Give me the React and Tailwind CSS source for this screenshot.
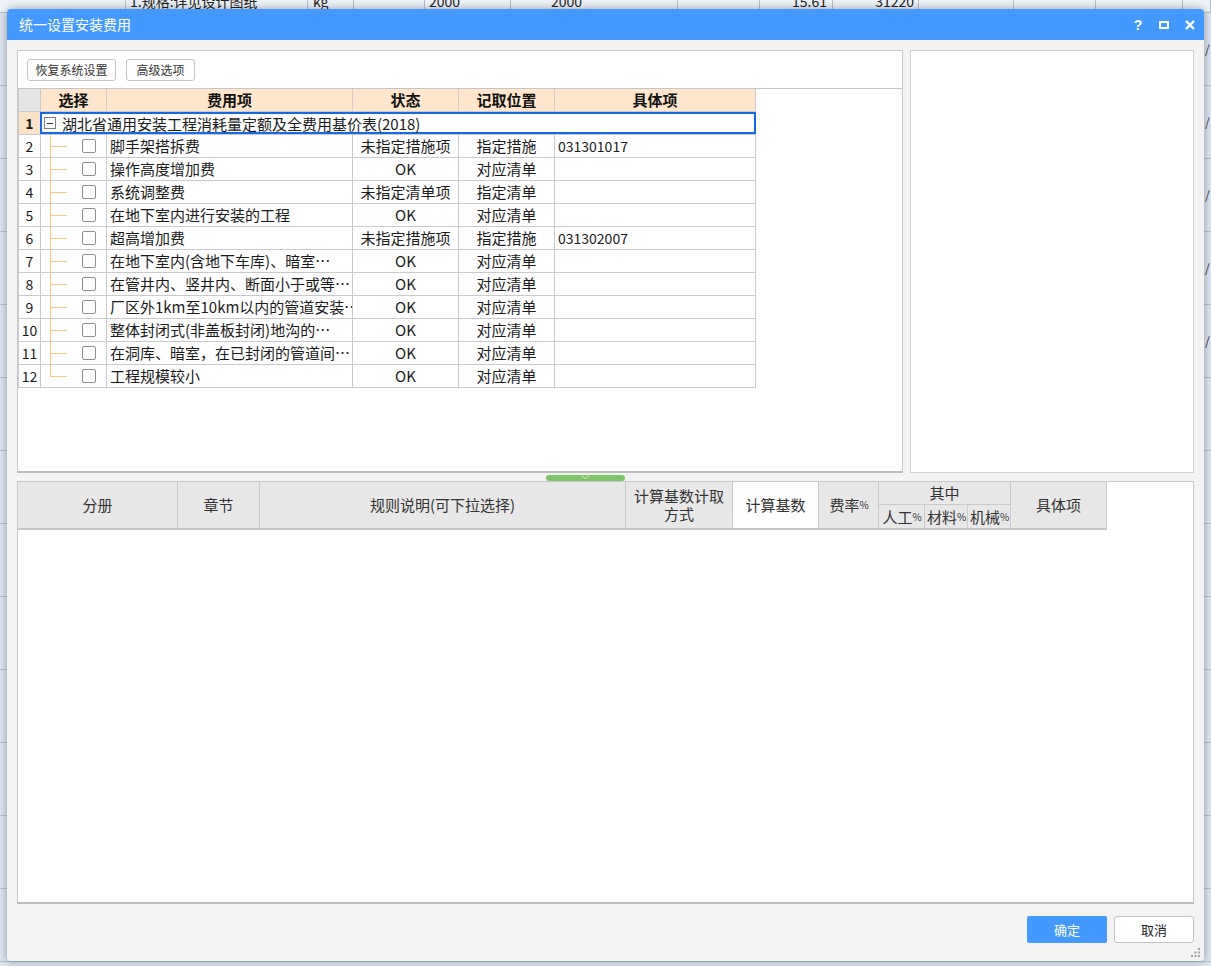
import React from 'react';

const FONT = "font-['Noto_Sans_CJK_SC','Liberation_Sans',sans-serif]";

const bgCells = [
  { w: 'w-[126px]', t: '' },
  { w: 'w-[182px]', t: '1.规格:详见设计图纸', c: 'pl-[4px]' },
  { w: 'w-[46px]', t: 'kg', c: 'pl-[5px]' },
  { w: 'w-[71px]', t: '' },
  { w: 'w-[86px]', t: '2000', c: 'pl-[4px]' },
  { w: 'w-[167px]', t: '2000', c: 'pl-[40px]' },
  { w: 'w-[82px]', t: '' },
  { w: 'w-[73px]', t: '15.61', c: 'text-right pr-[5px]' },
  { w: 'w-[86px]', t: '31220', c: 'text-right pr-[4px]' },
  { w: 'w-[95px]', t: '' },
  { w: 'w-[82px]', t: '' },
  { w: 'w-[87px]', t: '' },
  { w: 'w-[28px]', t: '' },
];

const rows = [
  { n: 2, name: '脚手架搭拆费', state: '未指定措施项', pos: '指定措施', item: '031301017' },
  { n: 3, name: '操作高度增加费', state: 'OK', pos: '对应清单', item: '' },
  { n: 4, name: '系统调整费', state: '未指定清单项', pos: '指定清单', item: '' },
  { n: 5, name: '在地下室内进行安装的工程', state: 'OK', pos: '对应清单', item: '' },
  { n: 6, name: '超高增加费', state: '未指定措施项', pos: '指定措施', item: '031302007' },
  { n: 7, name: '在地下室内(含地下车库)、暗室…', state: 'OK', pos: '对应清单', item: '' },
  { n: 8, name: '在管井内、竖井内、断面小于或等…', state: 'OK', pos: '对应清单', item: '' },
  { n: 9, name: '厂区外1km至10km以内的管道安装…', state: 'OK', pos: '对应清单', item: '' },
  { n: 10, name: '整体封闭式(非盖板封闭)地沟的…', state: 'OK', pos: '对应清单', item: '' },
  { n: 11, name: '在洞库、暗室，在已封闭的管道间…', state: 'OK', pos: '对应清单', item: '' },
  { n: 12, name: '工程规模较小', state: 'OK', pos: '对应清单', item: '' },
];

const FeeRow = ({ r, last }) => (
  <div className="flex h-[23px] border-b border-[#cacaca] text-[15px] leading-[22px] text-[#1a1a1a]">
    <div className="w-[22px] border-r border-[#cacaca] text-center text-[14px]">{r.n}</div>
    <div className="relative w-[66px] border-r border-[#cacaca]">
      {/* 树形连接线 */}
      <span className={`absolute left-[9px] top-0 w-px bg-[#ffc77d] ${last ? 'h-[11px]' : 'h-[23px]'}`} />
      <span className="absolute left-[9px] top-[11px] w-[17px] h-px bg-[#ffc77d]" />
      <span className="absolute left-[41px] top-[4px] w-[14px] h-[14px] border border-[#8f8f8f] rounded-[2px] bg-white" />
    </div>
    <div className="w-[246px] border-r border-[#cacaca] pl-[3px] whitespace-nowrap overflow-hidden">{r.name}</div>
    <div className="w-[106px] border-r border-[#cacaca] text-center">{r.state}</div>
    <div className="w-[96px] border-r border-[#cacaca] text-center">{r.pos}</div>
    <div className="w-[201px] border-r border-[#cacaca] pl-[3px] text-[14px]">{r.item}</div>
  </div>
);

const HeadCell = ({ w, children, extra = '' }) => (
  <div className={`${w} border-r border-[#cacaca] flex items-center justify-center text-[15px] text-[#333] ${extra}`}>
    {children}
  </div>
);

const Pct = () => <span className="text-[10px] tracking-[-1px]">%</span>;

export default function App() {
  return (
    <div className={`relative w-[1211px] h-[966px] overflow-hidden bg-[#dde5f1] ${FONT}`}>
      {/* 背景表格 */}
      <div className="flex h-[24px] -mt-[11px] bg-[#eef2f9] border-b border-[#b7c0cc] text-[14px] leading-[24px] text-[#222]">
        {bgCells.map((c, i) => (
          <div key={i} className={`${c.w} border-r border-[#b7c0cc] whitespace-nowrap overflow-hidden ${c.c || ''}`}>
            {c.t}
          </div>
        ))}
      </div>
      {Array.from({ length: 13 }).map((_, i) => (
        <div key={i} className="h-[73px] border-b border-[#b7c0cc] flex items-center justify-end">
          <span className="w-[6px] text-[12px] text-[#333]">{i < 5 ? '/' : ''}</span>
        </div>
      ))}

      {/* 对话框 */}
      <div className="absolute left-[7px] top-[9px] w-[1197px] h-[952px] bg-[#f3f3f3] rounded-[4px] shadow-[0_0_8px_rgba(0,0,0,0.35)] flex flex-col overflow-hidden">
        <div className="h-[31px] shrink-0 bg-[#4499ff] flex items-center pl-[12px] pr-[9px] text-white text-[14px]">
          <span>统一设置安装费用</span>
          <div className="ml-auto flex items-center">
            <span className="w-[10px] text-center text-[14px] font-bold leading-none font-['Liberation_Sans',sans-serif]">?</span>
            <span className="ml-[16px] w-[10px] h-[8px] border-2 border-white" />
            <svg className="ml-[16px]" width="10" height="10" viewBox="0 0 10 10">
              <path d="M1 1L9 9M9 1L1 9" stroke="white" strokeWidth="2.4" />
            </svg>
          </div>
        </div>

        <div className="flex-1 flex flex-col px-[10px] pt-[10px]">
          <div className="h-[423px] flex gap-[7px]">
            <div className="w-[886px] bg-white border border-[#c9c9c9] border-b-2 border-b-[#bcbcbc] flex flex-col">
              <div className="h-[38px] shrink-0 border-b border-[#c4c4c4] flex items-start pt-[8px] pl-[9px] gap-[10px]">
                <button className="w-[89px] h-[22px] bg-white border border-[#c4c4c4] rounded-[3px] text-[12px] text-[#333]">恢复系统设置</button>
                <button className="w-[69px] h-[22px] bg-white border border-[#c4c4c4] rounded-[3px] text-[12px] text-[#333]">高级选项</button>
              </div>
              <div className="w-[738px] border-l border-[#cacaca]">
                <div className="flex h-[23px] border-b border-[#cacaca] text-[15px] leading-[22px] font-bold text-[#111]">
                  <div className="w-[22px] bg-[#e6e6e6] border-r border-[#cacaca]" />
                  <div className="w-[66px] bg-[#ffe6cc] border-r border-[#d6cbbd] text-center">选择</div>
                  <div className="w-[246px] bg-[#ffe6cc] border-r border-[#d6cbbd] text-center">费用项</div>
                  <div className="w-[106px] bg-[#ffe6cc] border-r border-[#d6cbbd] text-center">状态</div>
                  <div className="w-[96px] bg-[#ffe6cc] border-r border-[#d6cbbd] text-center">记取位置</div>
                  <div className="w-[201px] bg-[#ffe6cc] border-r border-[#cacaca] text-center">具体项</div>
                </div>
                <div className="flex h-[23px] border-b border-[#cacaca] text-[15px] leading-[19px] text-[#1a1a1a]">
                  <div className="w-[22px] bg-[#fde3c5] border-r border-[#cacaca] text-center text-[14px] font-bold leading-[22px]">1</div>
                  <div className="w-[717px] -ml-px border-2 border-[#1669e6] flex items-center pl-[2px]">
                    <span className="w-[12px] h-[12px] border border-[#7d7d7d] flex items-center justify-center bg-white">
                      <span className="w-[6px] h-px bg-[#333]" />
                    </span>
                    <span className="ml-[6px] whitespace-nowrap">湖北省通用安装工程消耗量定额及全费用基价表(2018)</span>
                  </div>
                </div>
                {rows.map((r, i) => (
                  <FeeRow key={r.n} r={r} last={i === rows.length - 1} />
                ))}
              </div>
            </div>
            <div className="flex-1 bg-white border border-[#cfcfcf]" />
          </div>

          {/* 分隔条 */}
          <div className="h-[8px] shrink-0 pl-[529px] pt-[2px]">
            <div className="w-[79px] h-[6px] rounded-[3px] bg-[#7fc46a] flex justify-center">
              <svg width="9" height="5" viewBox="0 0 9 5">
                <path d="M1 0.5L4.5 4L8 0.5" stroke="#e6f4df" strokeWidth="1" fill="none" />
              </svg>
            </div>
          </div>

          <div className="h-[423px] shrink-0 bg-white border border-[#c9c9c9] border-b-2 border-b-[#bcbcbc]">
            <div className="flex w-[1089px] h-[48px] bg-[#e8e8e8] border-b-2 border-[#c6c6c6] leading-[18px]">
              <HeadCell w="w-[160px]">分册</HeadCell>
              <HeadCell w="w-[82px]">章节</HeadCell>
              <HeadCell w="w-[366px]">规则说明(可下拉选择)</HeadCell>
              <HeadCell w="w-[107px]" extra="flex-col">
                <span className="leading-[18px]">计算基数计取</span>
                <span className="leading-[18px]">方式</span>
              </HeadCell>
              <HeadCell w="w-[86px]" extra="bg-white">计算基数</HeadCell>
              <HeadCell w="w-[60px]">费率<Pct /></HeadCell>
              <div className="w-[132px] border-r border-[#cacaca] flex flex-col text-[15px] text-[#333]">
                <div className="h-[23px] border-b border-[#cacaca] flex items-center justify-center">其中</div>
                <div className="flex-1 flex whitespace-nowrap">
                  <div className="w-[46px] border-r border-[#cacaca] flex items-center justify-center">人工<Pct /></div>
                  <div className="w-[43px] border-r border-[#cacaca] flex items-center justify-center">材料<Pct /></div>
                  <div className="flex-1 flex items-center justify-center">机械<Pct /></div>
                </div>
              </div>
              <HeadCell w="w-[96px]">具体项</HeadCell>
            </div>
          </div>

          <div className="flex justify-end gap-[7px] pt-[12px]">
            <button className="w-[80px] h-[27px] bg-[#4499ff] rounded-[2px] text-white text-[13px]">确定</button>
            <button className="w-[80px] h-[27px] bg-white border border-[#c2c2c2] rounded-[3px] text-[#222] text-[13px]">取消</button>
          </div>
        </div>

        <svg className="absolute right-[3px] bottom-[3px]" width="10" height="10" viewBox="0 0 10 10">
          <rect x="7" y="0" width="2" height="2" fill="#a0a0a0" />
          <rect x="3.5" y="3.5" width="2" height="2" fill="#a0a0a0" />
          <rect x="7" y="3.5" width="2" height="2" fill="#a0a0a0" />
          <rect x="0" y="7" width="2" height="2" fill="#a0a0a0" />
          <rect x="3.5" y="7" width="2" height="2" fill="#a0a0a0" />
          <rect x="7" y="7" width="2" height="2" fill="#a0a0a0" />
        </svg>
      </div>
    </div>
  );
}
